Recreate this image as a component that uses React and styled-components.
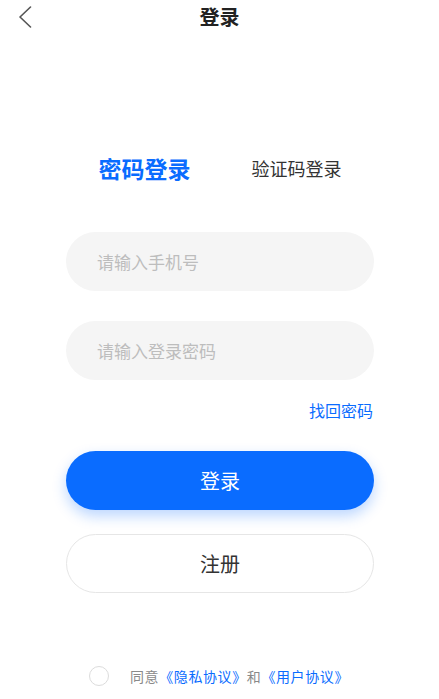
import React, { useState } from "react";
import styled, { createGlobalStyle } from "styled-components";

const GlobalStyle = createGlobalStyle`
  html, body { margin: 0; padding: 0; background: #ffffff; }
  body { font-family: "Noto Sans CJK SC", "Noto Sans", sans-serif; }
  * { box-sizing: border-box; }
`;

const BLUE = "#0a6cff";

const Page = styled.div`
  width: 439px;
  min-height: 699px;
  background: #fff;
  display: flex;
  flex-direction: column;
`;

const Header = styled.header`
  display: grid;
  grid-template-columns: 1fr auto 1fr;
  align-items: center;
  height: 33px;
  padding: 0 16px;
`;

const BackButton = styled.button`
  justify-self: start;
  border: none;
  background: none;
  padding: 0;
  width: 18px;
  height: 24px;
  display: flex;
  align-items: center;
  justify-content: center;
  cursor: pointer;
`;

const Title = styled.h1`
  margin: 0;
  font-size: 20px;
  font-weight: 700;
  color: #222;
  line-height: 33px;
`;

const Main = styled.main`
  display: flex;
  flex-direction: column;
  padding: 117px 65px 0 66px;
`;

const Tabs = styled.div`
  display: flex;
  justify-content: center;
  align-items: center;
  gap: 61px;
  height: 36px;
`;

const Tab = styled.button`
  border: none;
  background: none;
  padding: 0;
  cursor: pointer;
  font-family: inherit;
  line-height: 36px;
  font-size: ${(p) => (p.$active ? "23px" : "18px")};
  font-weight: ${(p) => (p.$active ? 700 : 400)};
  color: ${(p) => (p.$active ? BLUE : "#333")};
`;

const Form = styled.div`
  display: flex;
  flex-direction: column;
  gap: 30px;
  margin-top: 46px;
`;

const Input = styled.input`
  width: 100%;
  height: 59px;
  border: none;
  outline: none;
  border-radius: 30px;
  background: #f5f5f5;
  padding: 0 31px;
  font-family: inherit;
  font-size: 17px;
  color: #333;
  &::placeholder { color: #bdbdbd; }
`;

const ForgotRow = styled.div`
  display: flex;
  justify-content: flex-end;
  margin-top: 19px;
`;

const ForgotLink = styled.a`
  font-size: 16px;
  line-height: 22px;
  color: ${BLUE};
  text-decoration: none;
  margin-right: 1px;
  cursor: pointer;
`;

const Button = styled.button`
  width: 100%;
  height: 59px;
  border-radius: 30px;
  font-family: inherit;
  font-size: 20px;
  cursor: pointer;
  margin-top: ${(p) => p.$mt || 0}px;
  border: ${(p) => (p.$primary ? "none" : "1px solid #e6e6e6")};
  background: ${(p) => (p.$primary ? BLUE : "#fff")};
  color: ${(p) => (p.$primary ? "#fff" : "#333")};
  box-shadow: ${(p) => (p.$primary ? "0 6px 14px rgba(10, 108, 255, 0.28)" : "none")};
`;

const Agreement = styled.div`
  display: flex;
  align-items: center;
  margin-top: 73px;
  padding-left: 23px;
  height: 20px;
`;

const Radio = styled.span`
  width: 20px;
  height: 20px;
  border-radius: 50%;
  border: 1px solid #dcdcdc;
  margin-right: 21px;
  flex: none;
  background: ${(p) => (p.$checked ? BLUE : "#fff")};
  cursor: pointer;
`;

const AgreeText = styled.span`
  font-size: 14px;
  line-height: 20px;
  letter-spacing: 0.6px;
  color: #8a8a8a;
  white-space: nowrap;
`;

const AgreeLink = styled.a`
  color: ${BLUE};
  text-decoration: none;
  cursor: pointer;
`;

export default function App() {
  const [tab, setTab] = useState(0);
  const [agree, setAgree] = useState(false);
  return (
    <Page>
      <GlobalStyle />
      <Header>
        <BackButton aria-label="返回">
          <svg width="14" height="22" viewBox="0 0 14 22" fill="none">
            <polyline points="12.5,1 2,11 12.5,21" stroke="#555" strokeWidth="1.6" strokeLinecap="round" strokeLinejoin="round" />
          </svg>
        </BackButton>
        <Title>登录</Title>
        <span />
      </Header>
      <Main>
        <Tabs>
          <Tab $active={tab === 0} onClick={() => setTab(0)}>密码登录</Tab>
          <Tab $active={tab === 1} onClick={() => setTab(1)}>验证码登录</Tab>
        </Tabs>
        <Form>
          <Input placeholder="请输入手机号" />
          <Input type="password" placeholder="请输入登录密码" />
        </Form>
        <ForgotRow>
          <ForgotLink>找回密码</ForgotLink>
        </ForgotRow>
        <Button $primary $mt={30}>登录</Button>
        <Button $mt={24}>注册</Button>
        <Agreement>
          <Radio $checked={agree} onClick={() => setAgree(!agree)} />
          <AgreeText>
            同意<AgreeLink>《隐私协议》</AgreeLink>和<AgreeLink>《用户协议》</AgreeLink>
          </AgreeText>
        </Agreement>
      </Main>
    </Page>
  );
}
